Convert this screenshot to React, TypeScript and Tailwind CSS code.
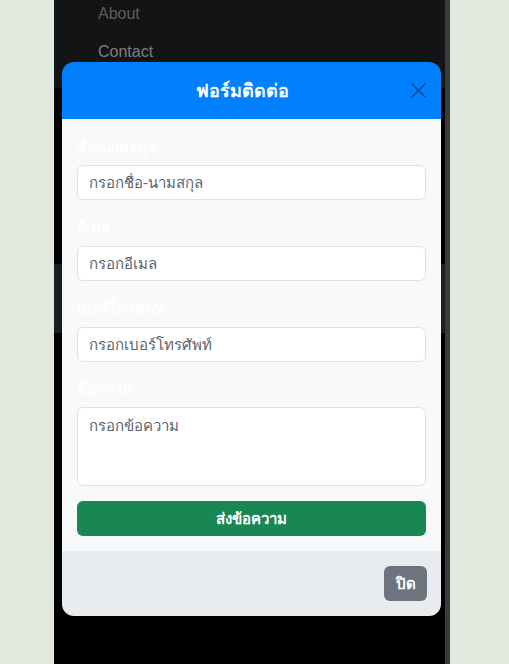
import React from "react";

function Field({ label, placeholder, mb = "mb-[16px]" }: { label: string; placeholder: string; mb?: string }) {
  return (
    <div className={mb}>
      <div className="text-[15px] leading-[22px] font-bold text-white mb-[8px]">{label}</div>
      <div className="h-[35px] bg-white border border-[#dee2e6] rounded-[6px] px-[11px] flex items-center text-[15px] text-[#5c636a]">
        {placeholder}
      </div>
    </div>
  );
}

export default function App() {
  return (
    <div
      className="w-[509px] h-[664px] bg-[#e1e9de] overflow-hidden"
      style={{ fontFamily: '"Noto Sans", "Liberation Sans", sans-serif' }}
    >
      <div className="ml-[54px] w-[396px] h-[664px] border-r-[5px] border-[#3b3b3d] bg-black relative">
        <div className="h-[88px] bg-[#131416] pl-[44px] pt-[4px]">
          <div className="text-[16px] leading-[20px] text-[#5e5f61]" style={{ fontFamily: '"Liberation Sans", Arial, sans-serif' }}>About</div>
          <div className="text-[16px] leading-[20px] text-[#7e7f81] mt-[18px]" style={{ fontFamily: '"Liberation Sans", Arial, sans-serif' }}>Contact</div>
        </div>
        <div className="h-[176px]" />
        <div className="h-[69px] bg-[#1c1d1f]" />

        <div className="absolute left-[8px] top-[62px] w-[379px] rounded-[12px] overflow-hidden">
          <div className="h-[57px] bg-[#0080ff] flex items-center pl-[16px] pr-[15px]">
            <div className="flex-1 text-center text-[18px] font-bold text-white pl-[2px]">ฟอร์มติดต่อ</div>
            <svg className="ml-[6px]" width="15" height="15" viewBox="0 0 15 15">
              <path d="M0.5 0.5 L14.5 14.5 M14.5 0.5 L0.5 14.5" stroke="#0b4c8c" strokeWidth="1.6" />
            </svg>
          </div>
          <div className="bg-[#f8f9fa] px-[15px] pt-[16px] pb-[15px]">
            <Field label="ชื่อ-นามสกุล" placeholder="กรอกชื่อ-นามสกุล" />
            <Field label="อีเมล" placeholder="กรอกอีเมล" />
            <Field label="เบอร์โทรศัพท์" placeholder="กรอกเบอร์โทรศัพท์" mb="mb-[15px]" />
            <div className="mb-[15px]">
              <div className="text-[15px] leading-[22px] font-bold text-white mb-[8px]">ข้อความ</div>
              <div className="h-[79px] bg-white border border-[#dee2e6] rounded-[6px] px-[11px] pt-[6px] text-[15px] text-[#5c636a]">
                กรอกข้อความ
              </div>
            </div>
            <div className="h-[35px] bg-[#198754] rounded-[6px] flex items-center justify-center text-[15px] font-bold text-white">
              ส่งข้อความ
            </div>
          </div>
          <div className="h-[65px] bg-[#e9ecef] flex items-center justify-end px-[14px]">
            <div className="h-[35px] w-[43px] bg-[#6c757d] rounded-[6px] flex items-center justify-center text-[15px] font-bold text-white">
              ปิด
            </div>
          </div>
        </div>
      </div>
    </div>
  );
}
